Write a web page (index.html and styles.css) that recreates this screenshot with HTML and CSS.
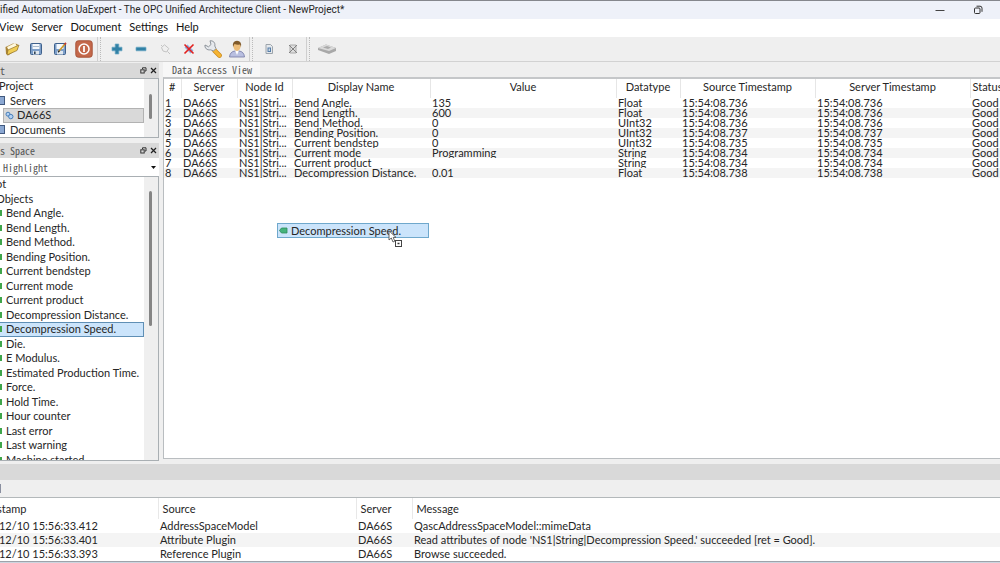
FILE: index.html
```html
<!DOCTYPE html>
<html lang="en">
<head>
<meta charset="utf-8">
<title>UaExpert</title>
<link rel="stylesheet" href="styles.css">
</head>
<body>
<header class="titlebar">
  <span class="title">ified Automation UaExpert - The OPC Unified Architecture Client - NewProject*</span>
  <button class="winbtn" aria-label="Minimize"><svg width="10" height="10"><path d="M0.5 5.5H9.5" stroke="#444"/></svg></button>
  <button class="winbtn" aria-label="Restore"><svg width="10" height="10" fill="none" stroke="#333"><rect x="1.5" y="3" width="5.5" height="5.5" rx="1"/><path d="M3.5 1.2H7Q9 1.2 9 3.2V6.8"/></svg></button>
</header>
<nav class="menubar">
  <button>View</button><button>Server</button><button>Document</button><button>Settings</button><button>Help</button>
</nav>
<div class="toolbar">
  <div class="group first">
    <button aria-label="Open"><svg width="18" height="18" viewBox="0 0 18 18"><path d="M2.5 7 10 3.5 14.5 4 15 9 5 15.5 3 13.5Z" fill="#a98335"/><path d="M4 7 12 3 14 6 6 11Z" fill="#fff8dc"/><path d="M4 15 5 10 16 5 14 10.5Z" fill="#f0cd55" stroke="#94742b" stroke-width=".7"/></svg></button>
    <button aria-label="Save"><svg width="18" height="18" viewBox="0 0 18 18"><rect x="3.5" y="3.5" width="11" height="11" rx="1" fill="#7d9fc9" stroke="#3f618c"/><rect x="5.5" y="4" width="7" height="5" fill="#f4f8fc"/><path d="M6 6.5H12" stroke="#aabbcc"/><rect x="6" y="11" width="6" height="3.5" fill="#dfe7ef"/><rect x="7" y="11.5" width="1.6" height="2.5" fill="#334455"/></svg></button>
    <button aria-label="Save as"><svg width="18" height="18" viewBox="0 0 18 18"><rect x="3.5" y="3.5" width="11" height="11" rx="1" fill="#7d9fc9" stroke="#3f618c"/><rect x="5.5" y="4" width="7" height="5" fill="#f4f8fc"/><rect x="6" y="11" width="6" height="3.5" fill="#dfe7ef"/><path d="M8 11 14 4" stroke="#d09a2a" stroke-width="1.7"/><path d="M7 12.2 8.5 10.8" stroke="#222" stroke-width="1.3"/><path d="M13.5 4.5 15 3" stroke="#b93b32" stroke-width="1.8"/></svg></button>
    <button aria-label="Quit"><svg width="18" height="18" viewBox="0 0 18 18"><rect x=".8" y=".8" width="16.4" height="16.4" rx="2.5" fill="#c4684a" stroke="#a8563c"/><circle cx="9" cy="9" r="5" fill="none" stroke="#fff" stroke-width="1.5"/><path d="M9 6V12" stroke="#fff" stroke-width="1.8"/></svg></button>
  </div>
  <div class="group second">
    <button aria-label="Add"><svg width="18" height="18" viewBox="0 0 18 18"><path d="M7.2 4h3.6v3.2H14v3.6h-3.2V14H7.2v-3.2H4V7.2h3.2Z" fill="#3181a6" stroke="#6ba9c4" stroke-width=".7"/></svg></button>
    <button aria-label="Remove"><svg width="18" height="18" viewBox="0 0 18 18"><rect x="4" y="7.2" width="10" height="3.6" rx=".5" fill="#3181a6" stroke="#6ba9c4" stroke-width=".7"/></svg></button>
    <button aria-label="Connect" disabled><svg width="18" height="18" viewBox="0 0 18 18" fill="none" stroke="#c3c3c3"><path d="M5.5 7.5 8.5 4.8 12.8 8.5 10.5 12 7 11Z"/><path d="M5 5 6.5 6.5M11.5 11.5 14 14"/></svg></button>
    <button aria-label="Disconnect"><svg width="18" height="18" viewBox="0 0 18 18"><path d="M6 6 12 12" stroke="#8fa8dc" stroke-width="4"/><path d="M4.5 4.5 13.5 13.5M13.5 4.5 4.5 13.5" stroke="#e3201d" stroke-width="1.6"/></svg></button>
    <button aria-label="Properties"><svg width="18" height="18" viewBox="0 0 18 18"><path d="M10.5 10.5 15.5 15.5" stroke="#c78618" stroke-width="4.6" stroke-linecap="round"/><path d="M10.5 10.5 15.5 15.5" stroke="#f5b432" stroke-width="3.2" stroke-linecap="round"/><path d="M6 .8C9 .5 11.5 2.5 10.8 6L12 8.5 9.5 11 6.5 9.8C3 10.5.5 8 1 5L4.5 6.8 7 4.5Z" fill="#e6e9ed" stroke="#828991" stroke-width=".9"/></svg></button>
    <button aria-label="User"><svg width="18" height="18" viewBox="0 0 18 18"><path d="M1.5 17Q2 11.5 7 11H11Q16 11.5 16.5 17Z" fill="#b9bfe0" stroke="#7379a4" stroke-width=".8"/><path d="M7 10.5 9 15 11 10.5Z" fill="#fff"/><ellipse cx="9" cy="6.3" rx="3.6" ry="4.6" fill="#edbd79"/><path d="M5 7Q4 1 9 .8 14 1 13 7L12 4.5Q9 5 6.5 4Z" fill="#805a2a"/></svg></button>
  </div>
  <div class="group third">
    <button aria-label="Add document"><svg width="18" height="18" viewBox="0 0 18 18"><path d="M6 4.5H10.5L12.5 6.5V13.5H6Z" fill="#e4e8ec" stroke="#9da4ab"/><rect x="7.5" y="7.5" width="3.5" height="4.5" fill="#557da8"/><path d="M9.2 8.5V11" stroke="#fff"/></svg></button>
    <button aria-label="Remove document" disabled><svg width="18" height="18" viewBox="0 0 18 18"><path d="M6 5H12V13H6Z" fill="#ddd" stroke="#aaa"/><path d="M5 5 13 13M13 5 5 13" stroke="#808080"/></svg></button>
  </div>
  <div class="group fourth">
    <button aria-label="Device" disabled><svg width="20" height="18" viewBox="0 0 20 18"><path d="M1 8 9 4.5 19 8V11L12 14 1 10Z" fill="#a8a8a8"/><path d="M1 8 9 4.5 19 8 12 11Z" fill="#d9d9d9"/><path d="M6 7.5 10 6 14 7.5 11 9Z" fill="#aaa"/></svg></button>
  </div>
</div>
<main class="work">
  <aside class="side">
    <section class="dock project">
      <h2 class="dockhead"><span class="name">t</span><button aria-label="Float"><svg width="7" height="7" fill="none" stroke="#333"><path d="M2.5 2V.8H6V4H5"/><rect x=".8" y="2.8" width="3.4" height="3.2"/></svg></button><button aria-label="Close"><svg width="7" height="7" stroke="#222" stroke-width="1.2"><path d="M1 1 6 6M6 1 1 6"/></svg></button></h2>
      <div class="tree">
        <ul class="rows four">
          <li class="root">Project</li>
          <li class="branch"><i class="book"></i>Servers</li>
          <li class="server picked"><svg width="9" height="9" viewBox="0 0 9 9" fill="#b4d2f3" stroke="#477eb9"><circle cx="3" cy="3.2" r="2"/><circle cx="5.8" cy="5.6" r="2.2"/></svg>DA66S</li>
          <li class="branch"><i class="book"></i>Documents</li>
        </ul>
        <div class="scroll"><i class="thumb short"></i></div>
      </div>
    </section>
    <section class="dock address">
      <h2 class="dockhead"><span class="name">s Space</span><button aria-label="Float"><svg width="7" height="7" fill="none" stroke="#333"><path d="M2.5 2V.8H6V4H5"/><rect x=".8" y="2.8" width="3.4" height="3.2"/></svg></button><button aria-label="Close"><svg width="7" height="7" stroke="#222" stroke-width="1.2"><path d="M1 1 6 6M6 1 1 6"/></svg></button></h2>
      <div class="combo"><select aria-label="Highlight mode"><option>Highlight</option></select><svg width="5" height="3"><path d="M0 0H5L2.5 3Z" fill="#111"/></svg></div>
      <div class="tree">
        <ul class="rows twenty">
          <li class="objects">ot</li>
          <li class="objects">Objects</li>
          <li class="tag">Bend Angle.</li>
          <li class="tag">Bend Length.</li>
          <li class="tag">Bend Method.</li>
          <li class="tag">Bending Position.</li>
          <li class="tag">Current bendstep</li>
          <li class="tag">Current mode</li>
          <li class="tag">Current product</li>
          <li class="tag">Decompression Distance.</li>
          <li class="tag chosen">Decompression Speed.</li>
          <li class="tag">Die.</li>
          <li class="tag">E Modulus.</li>
          <li class="tag">Estimated Production Time.</li>
          <li class="tag">Force.</li>
          <li class="tag">Hold Time.</li>
          <li class="tag">Hour counter</li>
          <li class="tag">Last error</li>
          <li class="tag">Last warning</li>
          <li class="tag">Machine started</li>
        </ul>
        <div class="scroll"><i class="thumb long"></i></div>
      </div>
    </section>
  </aside>
  <section class="docs">
    <div class="tabs"><button class="tab">Data Access View</button></div>
    <div class="view">
      <table class="data">
        <colgroup><col class="c-num"><col class="c-server"><col class="c-node"><col class="c-name"><col class="c-value"><col class="c-type"><col class="c-source"><col class="c-stamp"><col></colgroup>
        <thead><tr><th>#</th><th>Server</th><th>Node Id</th><th>Display Name</th><th>Value</th><th>Datatype</th><th>Source Timestamp</th><th>Server Timestamp</th><th class="last">Status</th></tr></thead>
        <tbody>
          <tr><td><span>1</span></td><td><span>DA66S</span></td><td><span>NS1|Stri...</span></td><td><span>Bend Angle.</span></td><td><span>135</span></td><td><span>Float</span></td><td><span>15:54:08.736</span></td><td><span>15:54:08.736</span></td><td><span>Good</span></td></tr>
          <tr><td><span>2</span></td><td><span>DA66S</span></td><td><span>NS1|Stri...</span></td><td><span>Bend Length.</span></td><td><span>600</span></td><td><span>Float</span></td><td><span>15:54:08.736</span></td><td><span>15:54:08.736</span></td><td><span>Good</span></td></tr>
          <tr><td><span>3</span></td><td><span>DA66S</span></td><td><span>NS1|Stri...</span></td><td><span>Bend Method.</span></td><td><span>0</span></td><td><span>UInt32</span></td><td><span>15:54:08.736</span></td><td><span>15:54:08.736</span></td><td><span>Good</span></td></tr>
          <tr><td><span>4</span></td><td><span>DA66S</span></td><td><span>NS1|Stri...</span></td><td><span>Bending Position.</span></td><td><span>0</span></td><td><span>UInt32</span></td><td><span>15:54:08.737</span></td><td><span>15:54:08.737</span></td><td><span>Good</span></td></tr>
          <tr><td><span>5</span></td><td><span>DA66S</span></td><td><span>NS1|Stri...</span></td><td><span>Current bendstep</span></td><td><span>0</span></td><td><span>UInt32</span></td><td><span>15:54:08.735</span></td><td><span>15:54:08.735</span></td><td><span>Good</span></td></tr>
          <tr><td><span>6</span></td><td><span>DA66S</span></td><td><span>NS1|Stri...</span></td><td><span>Current mode</span></td><td><span>Programming</span></td><td><span>String</span></td><td><span>15:54:08.734</span></td><td><span>15:54:08.734</span></td><td><span>Good</span></td></tr>
          <tr><td><span>7</span></td><td><span>DA66S</span></td><td><span>NS1|Stri...</span></td><td><span>Current product</span></td><td><span></span></td><td><span>String</span></td><td><span>15:54:08.734</span></td><td><span>15:54:08.734</span></td><td><span>Good</span></td></tr>
          <tr><td><span>8</span></td><td><span>DA66S</span></td><td><span>NS1|Stri...</span></td><td><span>Decompression Distance.</span></td><td><span>0.01</span></td><td><span>Float</span></td><td><span>15:54:08.738</span></td><td><span>15:54:08.738</span></td><td><span>Good</span></td></tr>
        </tbody>
      </table>
      <div class="dragged"><svg width="9" height="7" viewBox="0 0 9 7"><path d="M.5 3.5 2.5 1H8V6H2.5Z" fill="#45b37c" stroke="#2d8a5c" stroke-width=".8"/></svg>Decompression Speed.</div>
      <svg class="cursor" width="16" height="18" viewBox="0 0 16 18"><path d="M1 .8V10L3.3 8 5 12 6.8 11.2 5.2 7.4H8Z" fill="#fff" stroke="#555" stroke-width=".9"/><rect x="7.5" y="10.5" width="6" height="6" fill="#fff" stroke="#444"/><path d="M9.5 13.5H11.5" stroke="#333" stroke-width="1.5"/></svg>
    </div>
  </section>
</main>
<section class="log">
  <div class="loghead"></div>
  <div class="logbar"><i class="grip"></i></div>
  <table class="messages">
    <colgroup><col class="l-stamp"><col class="l-source"><col class="l-server"><col></colgroup>
    <thead><tr><th class="cut"><span>stamp</span></th><th>Source</th><th>Server</th><th>Message</th></tr></thead>
    <tbody>
      <tr><td class="cut"><span>/12/10 15:56:33.412</span></td><td>AddressSpaceModel</td><td>DA66S</td><td>QascAddressSpaceModel::mimeData</td></tr>
      <tr><td class="cut"><span>/12/10 15:56:33.401</span></td><td>Attribute Plugin</td><td>DA66S</td><td>Read attributes of node 'NS1|String|Decompression Speed.' succeeded [ret = Good].</td></tr>
      <tr><td class="cut"><span>/12/10 15:56:33.393</span></td><td>Reference Plugin</td><td>DA66S</td><td>Browse succeeded.</td></tr>
    </tbody>
  </table>
</section>
</body>
</html>
```
FILE: styles.css
```css
* { box-sizing: border-box; }
body {
  margin: 0;
  height: 100vh;
  display: flex;
  flex-direction: column;
  overflow: hidden;
  background: #efefef;
  color: #262626;
  font: 11px/14px Lato, sans-serif;
  white-space: nowrap;
}
button {
  border: 0;
  padding: 0;
  background: none;
  color: inherit;
  font: inherit;
}
button svg { display: block; }
.titlebar {
  flex: none;
  height: 19px;
  display: flex;
  align-items: center;
  border-top: 1px solid #85878d;
  background: #eef1f9;
  font: 10px/18px Roboto, sans-serif;
}
.title { flex: 1; }
.winbtn { width: 38px; display: flex; justify-content: center; }
.winbtn:last-child { margin-right: 3px; }
.menubar {
  flex: none;
  height: 18px;
  display: flex;
  gap: 8px;
  padding-bottom: 2px;
  background: #fff;
  color: #111;
}
.menubar button:first-child { margin-left: -1px; }
.toolbar {
  flex: none;
  height: 25px;
  display: flex;
  border-bottom: 1px solid #d2d2d2;
}
.group { display: flex; align-items: center; gap: 6px; border-right: 1px solid #cfcfcf; }
.group + .group { padding-left: 7px; border-left: 1px dotted #bbb; margin-left: 2px; }
.first { padding: 0 4px 0 3px; }
.second { padding-right: 3px; }
.third { padding-right: 4px; }
.fourth { border-right: 0; }
.work { flex: 1; min-height: 0; display: flex; gap: 4px; }
.side { width: 159px; flex: none; display: flex; flex-direction: column; gap: 5px; padding-top: 1px; padding-bottom: 3px; }
.dock { display: flex; flex-direction: column; min-height: 0; }
.address { flex: 1; }
.dockhead {
  flex: none;
  margin: 0;
  height: 15px;
  display: flex;
  align-items: center;
  gap: 3px;
  padding-right: 2px;
  background: #d9d9d9;
  color: #555;
  font: 10px/15px "Noto Sans Mono CJK SC", "Liberation Mono", monospace;
}
.name { flex: 1; }
.tree {
  flex: 1;
  min-height: 0;
  display: flex;
  overflow: hidden;
  border: 1px solid #a9afb3;
  border-left: 0;
  background: #fff;
}
.rows { flex: 1; min-width: 0; list-style: none; margin: 0; padding: 0; display: grid; grid-auto-rows: 1fr; }
.four { height: 58px; }
.twenty { height: 290px; }
.rows li { display: flex; align-items: center; min-height: 0; }
.root { margin-left: -1px; }
.branch { gap: 5px; }
.book { width: 5px; height: 9px; background: #8ba8d2; border: 1px solid #41597f; border-left: 0; }
.server { margin-left: 3px; padding-left: 1px; gap: 3px; }
.picked { background: #d9d9d9; border: 1px solid #b2b2b2; }
.objects { margin-left: -4px; }
.tag { gap: 4px; }
.tag::before { content: ""; width: 2px; height: 6px; background: #3fa54b; }
.chosen { background: #cbe4fb; border: 1px solid #5f8fb5; border-left: 0; }
.scroll { width: 14px; flex: none; background: #efefef; padding-left: 5px; }
.thumb { display: block; width: 3px; border-radius: 2px; background: #858585; }
.short { height: 25px; margin-top: 15px; }
.long { height: 135px; margin-top: 14px; }
.combo { flex: none; height: 18px; display: flex; align-items: center; padding: 0 3px; background: #fff; }
.combo select {
  flex: 1;
  appearance: none;
  border: 0;
  padding: 0;
  background: none;
  color: #555;
  font: 10px/15px "Noto Sans Mono CJK SC", "Liberation Mono", monospace;
}
.docs { flex: 1; min-width: 0; display: flex; flex-direction: column; padding-bottom: 5px; }
.tabs { flex: none; height: 15px; display: flex; }
.tab { padding: 0 8px 0 9px; background: #f7f7f7; color: #555; font: 10px/14px "Noto Sans Mono CJK SC", "Liberation Mono", monospace; }
.view { flex: 1; position: relative; min-height: 0; overflow: hidden; border: 1px solid #b9bdc0; border-right: 0; border-top: 2px solid #c5c7c9; background: #fff; }
table { width: 100%; table-layout: fixed; border-collapse: collapse; }
th, td { padding: 0; font-weight: normal; text-align: left; overflow: visible; }
.data th { height: 19px; padding-bottom: 3px; text-align: center; border-right: 1px solid #e6e6e6; }
.data .last { text-align: left; padding-left: 2px; border: 0; }
.data td { padding-left: 2px; }
.data td:first-child { padding-left: 1px; }
.data td span { display: block; height: 10px; line-height: 10px; overflow: hidden; }
tbody tr:nth-child(even) { background: #f4f4f4; }
.c-num { width: 17px; }
.c-server { width: 56px; }
.c-node { width: 55px; }
.c-name { width: 138px; }
.c-value { width: 186px; }
.c-type { width: 64px; }
.c-source { width: 135px; }
.c-stamp { width: 155px; }
.dragged {
  position: absolute;
  left: 113px;
  top: 144px;
  width: 152px;
  height: 15px;
  display: flex;
  align-items: center;
  gap: 3px;
  padding-left: 1px;
  border: 1px solid #6fa8cc;
  background: #cbe4fb;
}
.cursor { position: absolute; left: 224px; top: 151px; }
.log { flex: none; border-bottom: 1px solid #cdd5df; }
.loghead { height: 16px; background: #d9d9d9; }
.logbar { height: 18px; padding-top: 4px; border-bottom: 1px solid #b3b8ba; }
.grip { display: block; width: 1px; height: 9px; background: #8a8fa0; }
.messages { background: #fff; border-bottom: 1px solid #9ea3aa; }
.messages th { height: 21px; padding-left: 4px; border-right: 1px solid #e8e8e8; }
.messages th:last-child { border: 0; }
.messages td { height: 14px; padding-left: 2px; line-height: 14px; }
.messages .cut { padding-left: 0; }
.cut span { display: block; margin-left: -6px; }
th.cut span { margin-left: -3px; }
.l-stamp { width: 158px; }
.l-source { width: 198px; }
.l-server { width: 56px; }
```
